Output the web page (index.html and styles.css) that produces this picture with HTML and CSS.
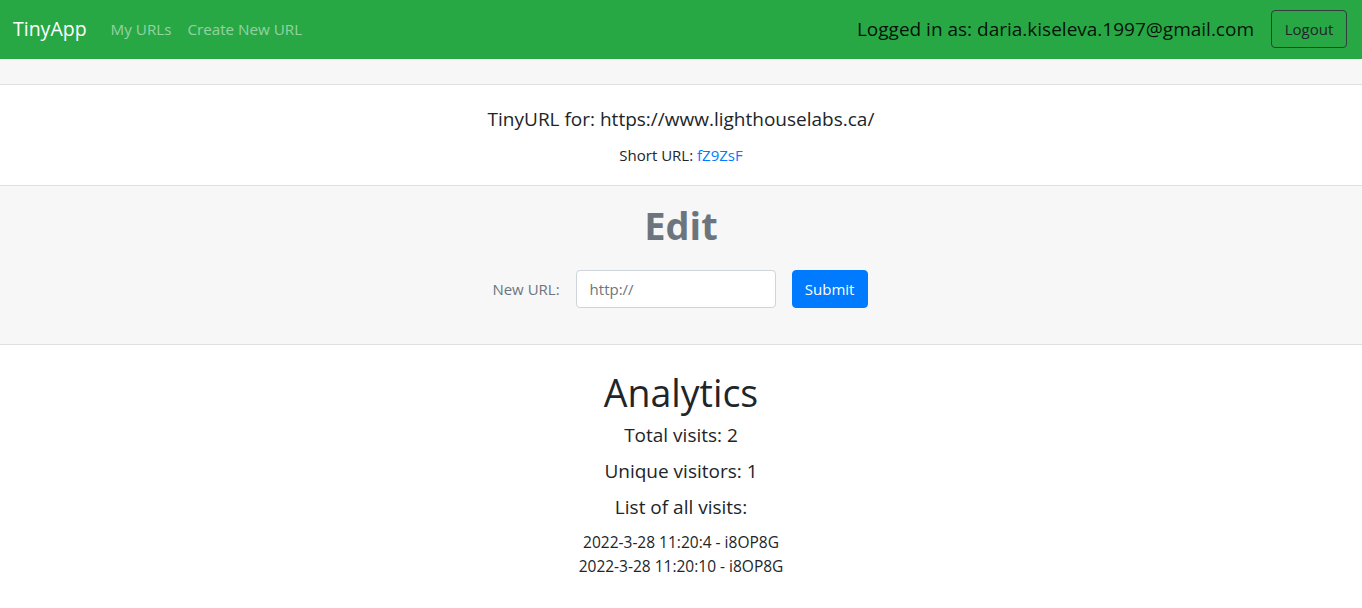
FILE: index.html
```html
<!DOCTYPE html>
<html lang="en">
<head>
<meta charset="utf-8">
<title>TinyApp</title>
<link rel="stylesheet" href="styles.css">
</head>
<body>
<nav class="navbar">
  <div class="nav-left">
    <a class="brand" href="#">TinyApp</a>
    <a class="nav-link" href="#">My URLs</a>
    <a class="nav-link" href="#">Create New URL</a>
  </div>
  <div class="nav-right">
    <span class="logged">Logged in as: daria.kiseleva.1997@gmail.com</span>
    <button class="btn-logout" type="button">Logout</button>
  </div>
</nav>
<main class="card">
  <div class="card-header"></div>
  <div class="card-body">
    <h5 class="card-title">TinyURL for: https://www.lighthouselabs.ca/</h5>
    <p class="card-text">Short URL: <a href="#">fZ9ZsF</a></p>
  </div>
  <div class="card-footer">
    <h1 class="edit-title">Edit</h1>
    <form class="edit-form">
      <label class="form-label" for="newurl">New URL:</label>
      <input class="form-input" id="newurl" type="text" placeholder="http://">
      <button class="btn-submit" type="button">Submit</button>
    </form>
  </div>
</main>
<section class="analytics">
  <h1 class="analytics-title">Analytics</h1>
  <p class="stat">Total visits: 2</p>
  <p class="stat">Unique visitors: 1</p>
  <p class="stat">List of all visits:</p>
  <ul class="visits">
    <li>2022-3-28 11:20:4 - i8OP8G</li>
    <li>2022-3-28 11:20:10 - i8OP8G</li>
  </ul>
</section>
</body>
</html>
```
FILE: styles.css
```css
* { box-sizing: border-box; }
body {
  margin: 0;
  font-family: "Open Sans", "Noto Sans", sans-serif;
  font-size: 15px;
  line-height: 1.5;
  color: #212529;
  background: #fff;
}
.navbar {
  background: #28a745;
  height: 59px;
  padding: 0 15px 1px 13px;
  display: flex;
  align-items: center;
  justify-content: space-between;
}
.nav-left { display: flex; align-items: center; }
.brand {
  color: #fff;
  font-size: 19.5px;
  text-decoration: none;
  margin-right: 24px;
}
.nav-link {
  color: rgba(255,255,255,.5);
  text-decoration: none;
  font-size: 15.2px;
  margin-right: 16px;
}
.nav-right { display: flex; align-items: center; }
.logged {
  color: rgba(0,0,0,.9);
  font-size: 19px;
  margin-right: 17px;
}
.btn-logout {
  font-family: inherit;
  font-size: 15px;
  color: #212529;
  background: transparent;
  border: 1px solid #343a40;
  border-radius: 4px;
  height: 38px;
  width: 76px;
  padding: 0;
}
.card { display: block; }
.card-header {
  height: 26px;
  background: #f7f7f7;
  border-bottom: 1px solid #dfdfdf;
}
.card-body {
  padding: 22px 20px 18px;
  text-align: center;
  border-bottom: 1px solid #dfdfdf;
}
.card-title {
  margin: 0 0 12px;
  font-size: 19px;
  font-weight: 400;
  line-height: 24px;
}
.card-text { margin: 0; font-size: 15px; line-height: 24px; }
.card-text a { color: #007bff; text-decoration: none; }
.card-footer {
  background: #f7f7f7;
  border-bottom: 1px solid #dfdfdf;
  padding: 15px 20px 36px;
  text-align: center;
}
.edit-title {
  margin: 0 0 21px;
  font-size: 38px;
  line-height: 48px;
  font-weight: 700;
  color: #6c757d;
}
.edit-form {
  display: flex;
  justify-content: center;
  align-items: center;
  margin-left: -2px;
}
.form-label { color: #6c757d; font-size: 15px; margin-right: 16px; }
.form-input {
  width: 200px;
  height: 38px;
  border: 1px solid #ced4da;
  border-radius: 4px;
  padding: 0 13px;
  font-family: inherit;
  font-size: 15px;
  color: #495057;
  background: #fff;
  margin-right: 16px;
}
.form-input::placeholder { color: #6c757d; }
.btn-submit {
  height: 38px;
  width: 76px;
  padding: 0;
  background: #007bff;
  color: #fff;
  border: 1px solid #007bff;
  border-radius: 4px;
  font-family: inherit;
  font-size: 15px;
}
.analytics {
  text-align: center;
  padding-top: 24px;
}
.analytics-title {
  margin: 0;
  font-size: 37.5px;
  font-weight: 400;
  line-height: 48px;
}
.stat {
  margin: 0;
  font-size: 19px;
  line-height: 36px;
}
.visits {
  list-style: none;
  margin: 5px 0 0;
  padding: 0;
  font-size: 15.5px;
  line-height: 24px;
}
```
